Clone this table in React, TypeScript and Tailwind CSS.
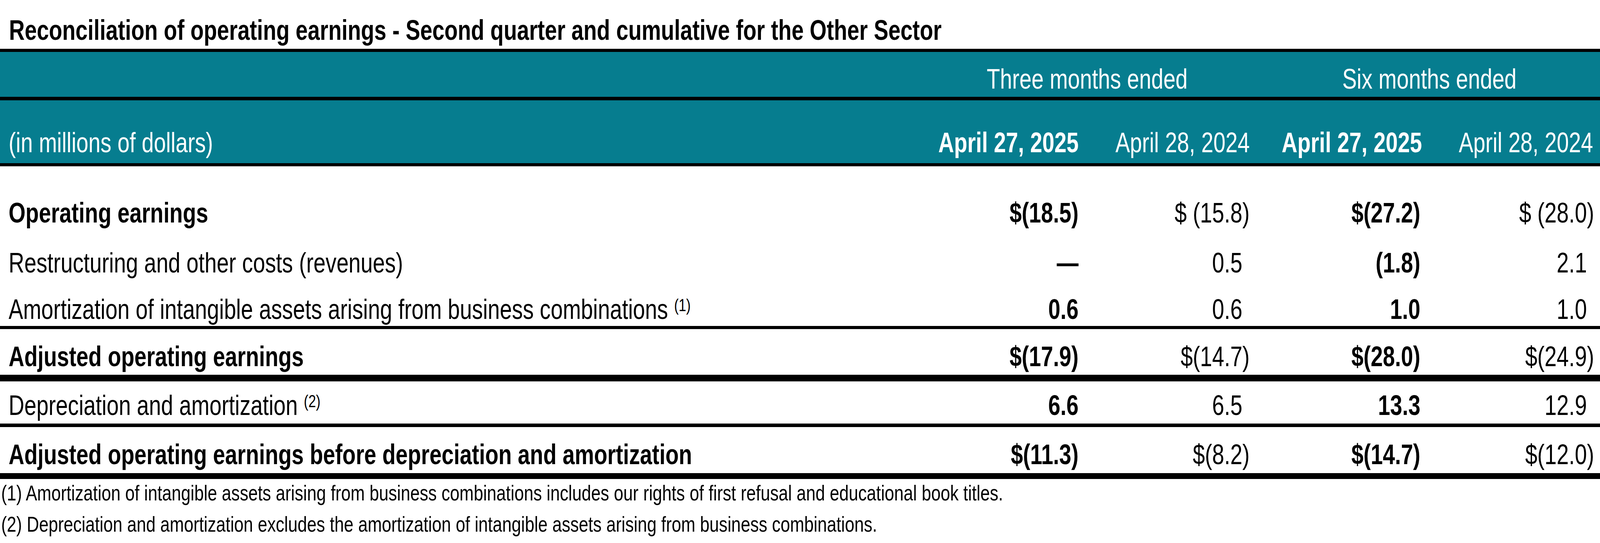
import * as React from 'react';

type Cell = { text: string; pad?: boolean };

type RowData = {
  label: string;
  note?: string;
  bold?: boolean;
  values: [Cell, Cell, Cell, Cell];
  pt: string;
  pb: string;
};

// The page is laid out 4096px wide; the report's narrow face is Liberation Sans squeezed sideways.
function Narrow({
  children,
  origin = 'origin-left',
  foot = false,
}: {
  children: React.ReactNode;
  origin?: string;
  foot?: boolean;
}) {
  return (
    <span className={`inline-block whitespace-nowrap ${foot ? 'scale-x-[0.793]' : 'scale-x-[0.774]'} ${origin}`}>
      {children}
    </span>
  );
}

// right padding per value column, so figures land where the report put them
const colPad = ['pr-[22px]', 'pr-[7px]', 'pr-[15px]', 'pr-[15px]'];
const cols = 'grid grid-cols-[minmax(0,1fr)_423px_423px_445px_445px]';

const rows: RowData[] = [
  {
    label: 'Operating earnings',
    bold: true,
    values: [{ text: '$(18.5)' }, { text: '$ (15.8)' }, { text: '$(27.2)' }, { text: '$ (28.0)' }],
    pt: 'pt-[83px]',
    pb: 'pb-0',
  },
  {
    label: 'Restructuring and other costs (revenues)',
    values: [{ text: '—' }, { text: '0.5', pad: true }, { text: '(1.8)' }, { text: '2.1', pad: true }],
    pt: 'pt-[56px]',
    pb: 'pb-0',
  },
  {
    label: 'Amortization of intangible assets arising from business combinations',
    note: '(1)',
    values: [{ text: '0.6' }, { text: '0.6', pad: true }, { text: '1.0' }, { text: '1.0', pad: true }],
    pt: 'pt-[47px]',
    pb: 'pb-[7px]',
  },
];

function ValueCells({ values }: { values: Cell[] }) {
  return (
    <>
      {values.map((v, i) => (
        <div
          key={i}
          className={`flex justify-end whitespace-pre ${colPad[i]} ${i % 2 === 0 ? 'font-bold' : 'font-normal'}`}
        >
          <Narrow origin="origin-right">
            {v.text}
            {v.pad && <span className="invisible">)</span>}
          </Narrow>
        </div>
      ))}
    </>
  );
}

function BodyRow({ row }: { row: RowData }) {
  return (
    <div className={`${cols} ${row.pt} ${row.pb}`}>
      <div className={`pl-[22px] whitespace-nowrap ${row.bold ? 'font-bold' : ''}`}>
        <Narrow>
          {row.label}
          {row.note && (
            <>
              {' '}
              <span className="relative -top-[20px] text-[45px] leading-none font-normal">{row.note}</span>
            </>
          )}
        </Narrow>
      </div>
      <ValueCells values={row.values} />
    </div>
  );
}

export default function App() {
  return (
    <div className="w-full overflow-hidden bg-white text-black font-['Liberation_Sans','Arial',sans-serif] text-[72px] leading-[72px]">
      {/* Title */}
      <div className="h-[125px] pt-[41px] pl-[23px] font-bold whitespace-nowrap">
        <Narrow>Reconciliation of operating earnings - Second quarter and cumulative for the Other Sector</Narrow>
      </div>
      <div className="h-[8px] bg-black" />

      {/* Header band */}
      <div className="bg-[#067d8f] text-white">
        <div className="grid grid-cols-[minmax(0,1fr)_846px_890px] h-[115px] pt-[33px]">
          <div />
          <div className="flex justify-center">
            <Narrow origin="origin-center">Three months ended</Narrow>
          </div>
          <div className="flex justify-center pl-[16px]">
            <Narrow origin="origin-center">Six months ended</Narrow>
          </div>
        </div>
        <div className="h-[9px] bg-black" />
        <div className={`${cols} h-[161px] pt-[72px]`}>
          <div className="pl-[22px]">
            <Narrow>(in millions of dollars)</Narrow>
          </div>
          <div className="flex justify-end pr-[22px] font-bold">
            <Narrow origin="origin-right">April 27, 2025</Narrow>
          </div>
          <div className="flex justify-end pr-[7px]">
            <Narrow origin="origin-right">April 28, 2024</Narrow>
          </div>
          <div className="flex justify-end pr-[11px] font-bold">
            <Narrow origin="origin-right">April 27, 2025</Narrow>
          </div>
          <div className="flex justify-end pr-[18px]">
            <Narrow origin="origin-right">April 28, 2024</Narrow>
          </div>
        </div>
      </div>
      <div className="h-[8px] bg-black" />

      {/* Body */}
      {rows.map((r, i) => (
        <BodyRow key={i} row={r} />
      ))}
      <div className="h-[8px] bg-black" />

      <BodyRow
        row={{
          label: 'Adjusted operating earnings',
          bold: true,
          values: [{ text: '$(17.9)' }, { text: '$(14.7)' }, { text: '$(28.0)' }, { text: '$(24.9)' }],
          pt: 'pt-[34px]',
          pb: 'pb-[11px]',
        }}
      />
      <div className="h-[17px] bg-black" />

      <BodyRow
        row={{
          label: 'Depreciation and amortization',
          note: '(2)',
          values: [{ text: '6.6' }, { text: '6.5', pad: true }, { text: '13.3' }, { text: '12.9', pad: true }],
          pt: 'pt-[25px]',
          pb: 'pb-[11px]',
        }}
      />
      <div className="h-[9px] bg-black" />

      <BodyRow
        row={{
          label: 'Adjusted operating earnings before depreciation and amortization',
          bold: true,
          values: [{ text: '$(11.3)' }, { text: '$(8.2)' }, { text: '$(14.7)' }, { text: '$(12.0)' }],
          pt: 'pt-[34px]',
          pb: 'pb-[12px]',
        }}
      />
      <div className="h-[15px] bg-black" />

      {/* Footnotes */}
      <div className="pt-[9px] pb-[21px] pl-[3px] text-[55px] leading-[54px] flex flex-col gap-[26px]">
        <p>
          <Narrow foot>
            (1) Amortization of intangible assets arising from business combinations includes our rights of first refusal and educational book titles.
          </Narrow>
        </p>
        <p>
          <Narrow foot>
            (2) Depreciation and amortization excludes the amortization of intangible assets arising from business combinations.
          </Narrow>
        </p>
      </div>
    </div>
  );
}
